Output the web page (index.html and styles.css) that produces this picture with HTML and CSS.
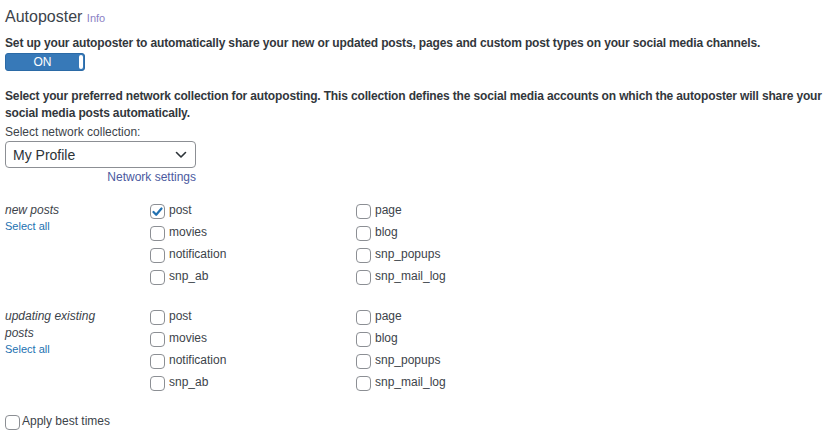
FILE: index.html
```html
<!DOCTYPE html>
<html lang="en">
<head>
<meta charset="utf-8">
<title>Autoposter</title>
<link rel="stylesheet" href="styles.css">
</head>
<body>
<div class="wrap">
  <h2 class="title">Autoposter <a class="info" href="#">Info</a></h2>
  <p class="bold">Set up your autoposter to automatically share your new or updated posts, pages and custom post types on your social media channels.</p>
  <div class="toggle"><span class="toggle-text">ON</span><span class="knob"></span></div>
  <p class="bold desc">Select your preferred network collection for autoposting. This collection defines the social media accounts on which the autoposter will share your social media posts automatically.</p>
  <div class="field-label">Select network collection:</div>
  <div class="select-block">
    <div class="select"><span>My Profile</span>
      <svg class="chev" width="12" height="8" viewBox="0 0 12 8"><path d="M1.5 1.5 L6 6 L10.5 1.5" fill="none" stroke="#2c3338" stroke-width="1.6" stroke-linecap="round" stroke-linejoin="round"/></svg>
    </div>
    <a class="netset" href="#">Network settings</a>
  </div>

  <div class="group">
    <div class="g-label"><div class="g-title">new posts</div><a class="sel-all" href="#">Select all</a></div>
    <div class="g-col">
      <label class="cb"><span class="box checked"><svg width="11" height="10" viewBox="0 0 11 10"><path d="M1.5 5 L4.2 7.8 L9.5 1.5" fill="none" stroke="#2271b1" stroke-width="2.2" stroke-linecap="round" stroke-linejoin="round"/></svg></span>post</label>
      <label class="cb"><span class="box"></span>movies</label>
      <label class="cb"><span class="box"></span>notification</label>
      <label class="cb"><span class="box"></span>snp_ab</label>
    </div>
    <div class="g-col">
      <label class="cb"><span class="box"></span>page</label>
      <label class="cb"><span class="box"></span>blog</label>
      <label class="cb"><span class="box"></span>snp_popups</label>
      <label class="cb"><span class="box"></span>snp_mail_log</label>
    </div>
  </div>

  <div class="group">
    <div class="g-label"><div class="g-title">updating existing posts</div><a class="sel-all" href="#">Select all</a></div>
    <div class="g-col">
      <label class="cb"><span class="box"></span>post</label>
      <label class="cb"><span class="box"></span>movies</label>
      <label class="cb"><span class="box"></span>notification</label>
      <label class="cb"><span class="box"></span>snp_ab</label>
    </div>
    <div class="g-col">
      <label class="cb"><span class="box"></span>page</label>
      <label class="cb"><span class="box"></span>blog</label>
      <label class="cb"><span class="box"></span>snp_popups</label>
      <label class="cb"><span class="box"></span>snp_mail_log</label>
    </div>
  </div>

  <label class="cb best"><span class="box"></span>Apply best times</label>
</div>
</body>
</html>
```

FILE: styles.css
```css
html, body {
  margin: 0;
  padding: 0;
  background: #ffffff;
}
body {
  font-family: "Liberation Sans", Arial, sans-serif;
  font-size: 12px;
  color: #3c434a;
}
.wrap {
  padding: 5px 0 0 5px;
}
.title {
  margin: 0;
  font-size: 16px;
  font-weight: normal;
  line-height: 24px;
  color: #3c434a;
}
.info {
  font-size: 11px;
  color: #8a7fc4;
  text-decoration: none;
}
.bold {
  margin: 5px 0 0 0;
  font-weight: bold;
  line-height: 17px;
  letter-spacing: -0.15px;
  color: #32373c;
}
.toggle {
  margin-top: 1px;
  width: 80px;
  height: 18px;
  box-sizing: border-box;
  background: #3779b8;
  border: 1px solid #2b6aa6;
  border-radius: 3px;
  display: flex;
  align-items: center;
  color: #fff;
}
.toggle-text {
  flex: 1;
  text-align: center;
  font-size: 12px;
  line-height: 16px;
}
.knob {
  width: 4px;
  height: 14px;
  background: #fff;
  border-radius: 2px;
  margin-right: 1px;
}
.desc {
  margin-top: 17px;
}
.field-label {
  margin-top: 2px;
  line-height: 17px;
}
.select-block {
  width: 191px;
  display: flex;
  flex-direction: column;
  align-items: flex-end;
}
.select {
  margin-top: 0;
  align-self: stretch;
  height: 27px;
  box-sizing: border-box;
  border: 1px solid #8c8f94;
  border-radius: 4px;
  display: flex;
  align-items: center;
  justify-content: space-between;
  padding: 0 8px 0 7px;
  font-size: 14px;
  color: #2c3338;
}
.netset {
  margin-top: 2px;
  line-height: 15px;
  color: #4b5aa0;
  text-decoration: none;
}
.group {
  display: grid;
  grid-template-columns: 145px 206px 1fr;
  margin-top: 17px;
}
.group + .group {
  margin-top: 18px;
}
.g-title {
  font-style: italic;
  line-height: 17px;
  width: 100px;
}
.sel-all {
  display: block;
  font-size: 11px;
  line-height: 15px;
  color: #2271b1;
  text-decoration: none;
}
.g-col {
  display: flex;
  flex-direction: column;
}
.cb {
  display: flex;
  align-items: flex-start;
  height: 22px;
  line-height: 17px;
  color: #3c434a;
}
.box {
  width: 13px;
  height: 13px;
  border: 1px solid #8c8f94;
  border-radius: 4px;
  background: #fff;
  margin-right: 4px;
  margin-top: 2px;
  display: flex;
  align-items: center;
  justify-content: center;
}
.best {
  margin-top: 17px;
}
.best .box {
  margin-right: 2px;
}
```
